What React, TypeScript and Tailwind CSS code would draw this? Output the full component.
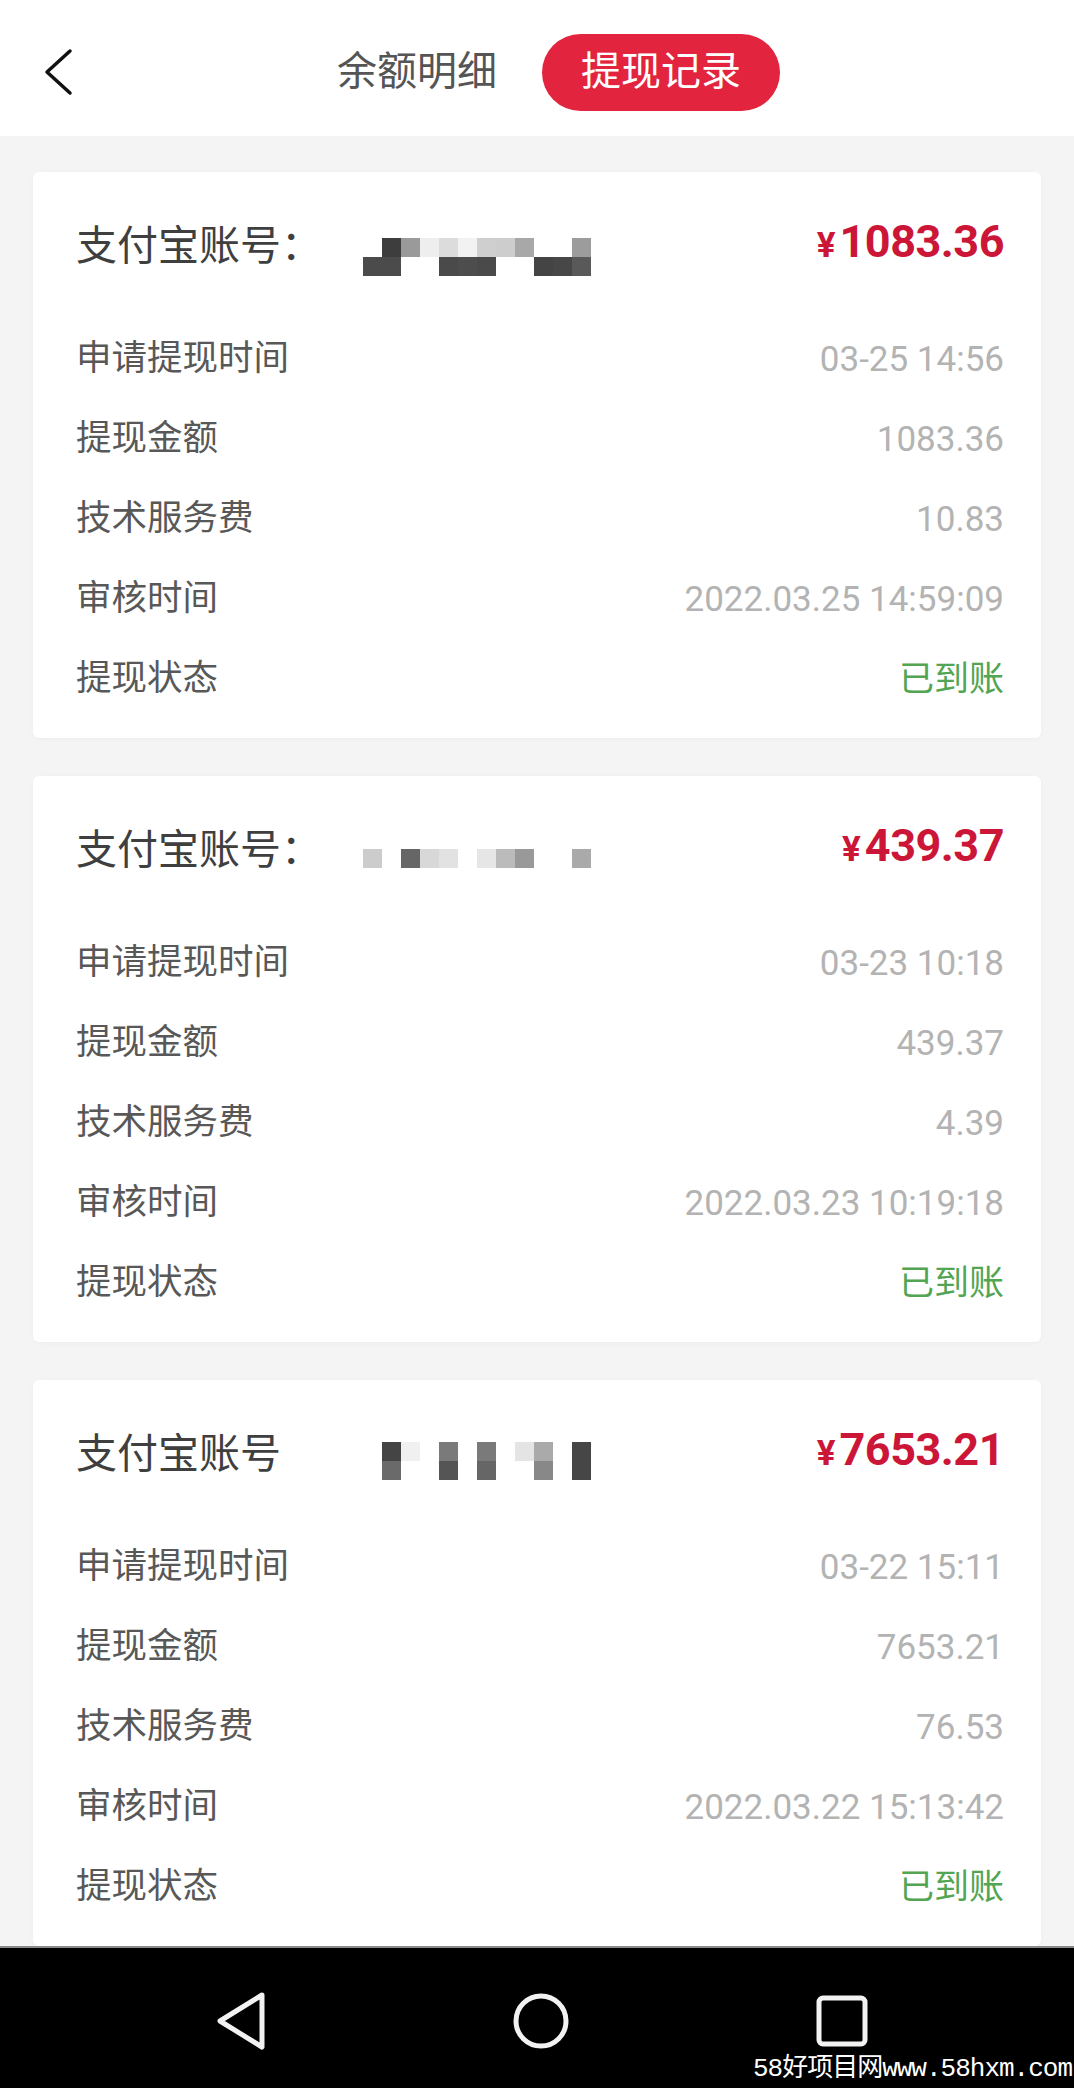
import React from 'react';

type Row = { label: string; value: string; green?: boolean };

interface Record {
  title: string;
  amount: string;
  mosaic: string[][];
  mosaicOffset: string;
  rows: Row[];
}

const records: Record[] = [
  {
    title: '支付宝账号：',
    amount: '1083.36',
    mosaicOffset: 'mt-[22px]',
    mosaic: [
      ['', 'bg-[#3d3d3d]', 'bg-[#9a9a9a]', 'bg-[#eeeeee]', 'bg-[#dcdcdc]', 'bg-[#f2f2f2]', 'bg-[#cfcfcf]', 'bg-[#cdcdcd]', 'bg-[#a8a8a8]', '', '', 'bg-[#9c9c9c]'],
      ['bg-[#4b4b4b]', 'bg-[#4b4b4b]', '', '', 'bg-[#4a4a4a]', 'bg-[#4d4d4d]', 'bg-[#4a4a4a]', '', '', 'bg-[#444444]', 'bg-[#474747]', 'bg-[#595959]'],
    ],
    rows: [
      { label: '申请提现时间', value: '03-25 14:56' },
      { label: '提现金额', value: '1083.36' },
      { label: '技术服务费', value: '10.83' },
      { label: '审核时间', value: '2022.03.25 14:59:09' },
      { label: '提现状态', value: '已到账', green: true },
    ],
  },
  {
    title: '支付宝账号：',
    amount: '439.37',
    mosaicOffset: 'mt-[16px]',
    mosaic: [
      ['bg-[#cccccc]', '', 'bg-[#666666]', 'bg-[#d8d8d8]', 'bg-[#e2e2e2]', '', 'bg-[#e6e6e6]', 'bg-[#bbbbbb]', 'bg-[#999999]', '', '', 'bg-[#aaaaaa]'],
    ],
    rows: [
      { label: '申请提现时间', value: '03-23 10:18' },
      { label: '提现金额', value: '439.37' },
      { label: '技术服务费', value: '4.39' },
      { label: '审核时间', value: '2022.03.23 10:19:18' },
      { label: '提现状态', value: '已到账', green: true },
    ],
  },
  {
    title: '支付宝账号',
    amount: '7653.21',
    mosaicOffset: 'mt-[14px]',
    mosaic: [
      ['', 'bg-[#444444]', 'bg-[#f0f0f0]', '', 'bg-[#7a7a7a]', '', 'bg-[#7a7a7a]', '', 'bg-[#e4e4e4]', 'bg-[#aaaaaa]', '', 'bg-[#464646]'],
      ['', 'bg-[#6a6a6a]', '', '', 'bg-[#555555]', '', 'bg-[#666666]', '', '', 'bg-[#888888]', '', 'bg-[#464646]'],
    ],
    rows: [
      { label: '申请提现时间', value: '03-22 15:11' },
      { label: '提现金额', value: '7653.21' },
      { label: '技术服务费', value: '76.53' },
      { label: '审核时间', value: '2022.03.22 15:13:42' },
      { label: '提现状态', value: '已到账', green: true },
    ],
  },
];

function Mosaic({ cells, offset }: { cells: string[][]; offset: string }) {
  return (
    <div className={`flex flex-col blur-[0.6px] ${offset}`}>
      {cells.map((row, i) => (
        <div key={i} className="flex">
          {row.map((c, j) => (
            <div key={j} className={`w-[19px] h-[19px] ${c}`} />
          ))}
        </div>
      ))}
    </div>
  );
}

function RecordCard({ item }: { item: Record }) {
  return (
    <div className="bg-white rounded-md shadow-[0_1px_4px_rgba(0,0,0,0.03)] pl-[43px] pr-[37px] pt-[46px] pb-[19px]">
      <div className="flex items-center h-[56px]">
        <span className="w-[287px] shrink-0 text-[41px] leading-none text-[#3f3f3f]">{item.title}</span>
        <Mosaic cells={item.mosaic} offset={item.mosaicOffset} />
        <div className="ml-auto flex items-baseline font-bold text-[#cc1638]">
          <span className="text-[35px] mr-[4px]">¥</span>
          <span className="text-[45px] tracking-[-0.5px] leading-none">{item.amount}</span>
        </div>
      </div>
      <div className="mt-[45px]">
        {item.rows.map((r) => (
          <div key={r.label} className="flex items-center justify-between h-20">
            <span className="text-[35.5px] leading-none text-[#585858]">{r.label}</span>
            <span className={`text-[35px] leading-none ${r.green ? 'text-[#52a552]' : 'text-[#b3b3b3]'}`}>
              {r.value}
            </span>
          </div>
        ))}
      </div>
    </div>
  );
}

export default function App() {
  return (
    <div className="w-full bg-[#f4f4f4] font-[Roboto,'Noto_Sans_CJK_SC',sans-serif]">
      <header className="h-[136px] bg-white flex items-center pt-[8px]">
        <svg width="30" height="48" viewBox="0 0 30 48" className="ml-[43px] shrink-0">
          <path d="M27 3 L4 24 L27 45" fill="none" stroke="#111" strokeWidth="3.5" strokeLinecap="round" strokeLinejoin="round" />
        </svg>
        <span className="ml-[264px] text-[40px] leading-none text-[#555555]">余额明细</span>
        <span className="ml-[45px] h-[77px] px-[39px] rounded-full bg-[#e2243f] text-white text-[40px] leading-none flex items-center">
          提现记录
        </span>
      </header>

      <main className="px-[33px] pt-[36px] flex flex-col gap-[38px]">
        {records.map((r, i) => (
          <RecordCard key={i} item={r} />
        ))}
      </main>

      <nav className="relative h-[142px] bg-black border-t-2 border-[#8a8a8a] flex items-center pl-[216px] gap-[246px] pt-[6px]">
        <svg width="50" height="58" viewBox="0 0 50 58">
          <path d="M46 3 L4 29 L46 55 Z" fill="none" stroke="#f2f2f2" strokeWidth="5" strokeLinejoin="round" />
        </svg>
        <svg width="58" height="58" viewBox="0 0 58 58">
          <circle cx="29" cy="29" r="25" fill="none" stroke="#f2f2f2" strokeWidth="5" />
        </svg>
        <svg width="52" height="52" viewBox="0 0 52 52">
          <rect x="3" y="3" width="46" height="46" rx="4" fill="none" stroke="#f2f2f2" strokeWidth="5" />
        </svg>
        <span className="absolute right-[2px] bottom-[6px] text-[26px] leading-none text-white font-['Liberation_Mono','Noto_Sans_CJK_SC',monospace] tracking-[-1px]">
          58好项目网www.58hxm.com
        </span>
      </nav>
    </div>
  );
}
